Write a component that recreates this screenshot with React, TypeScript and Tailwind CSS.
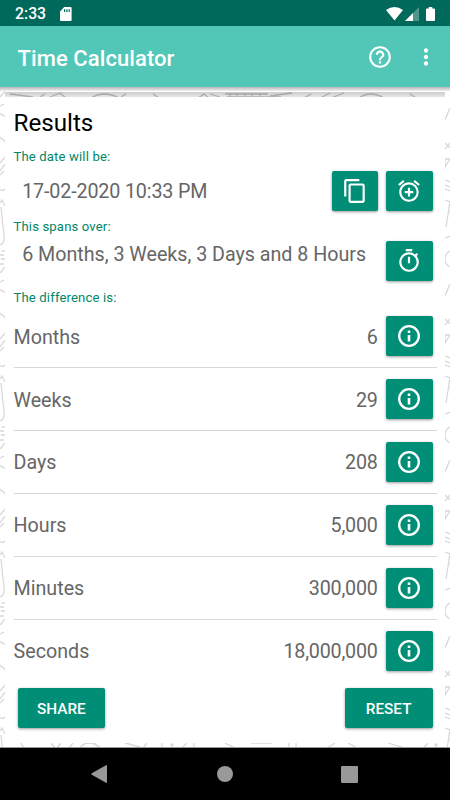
import type { ReactNode } from 'react';
import {
  MdAddAlarm,
  MdContentCopy,
  MdHelpOutline,
  MdMoreVert,
  MdOutlineTimer,
} from 'react-icons/md';

const differences = [
  { unit: 'Months', value: '6' },
  { unit: 'Weeks', value: '29' },
  { unit: 'Days', value: '208' },
  { unit: 'Hours', value: '5,000' },
  { unit: 'Minutes', value: '300,000' },
  { unit: 'Seconds', value: '18,000,000' },
];

export default function App() {
  return (
    <div className="flex h-[800px] w-[450px] flex-col overflow-hidden bg-white font-[Roboto,sans-serif]">
      <StatusBar />
      <AppBar />
      <main className="relative h-[661px] overflow-hidden">
        <Doodles />
        <div className="relative h-1 bg-gradient-to-b from-[#b8b8b8] to-[#f0f0f0]" />
        <div className="relative mx-[5px] h-px bg-white" />
        <div className="relative mx-[5px] h-[5px] bg-gradient-to-b from-black/20 to-black/10" />
        <section className="relative mx-[5px] h-[646px] bg-white pr-2 pl-[8.5px]">
          <h2 className="h-[51.5px] pt-[10px] text-[24.2px] leading-8 text-black">Results</h2>
          <Label>The date will be:</Label>
          <div className="flex h-[55px] items-start pt-[7px] pr-[4.5px]">
            <p className="flex-1 pl-[8.7px] text-[19.7px] leading-[42px] tracking-[-0.14px] text-[#666]">17-02-2020 10:33 PM</p>
            <IconButton label="Copy"><MdContentCopy size={26} /></IconButton>
            <div className="w-2" />
            <IconButton label="Add alarm"><MdAddAlarm size={26} /></IconButton>
          </div>
          <Label>This spans over:</Label>
          <div className="flex h-[55.5px] items-start pt-[6.4px] pr-[4.5px]">
            <p className="flex-1 pl-[8.7px] text-[19.7px] leading-[27px] tracking-[-0.02px] whitespace-nowrap text-[#666]">
              6 Months, 3 Weeks, 3 Days and 8 Hours
            </p>
            <IconButton label="Timer"><MdOutlineTimer size={26} /></IconButton>
          </div>
          <Label>The difference is:</Label>
          <ul>
            {differences.map((row) => (
              <li
                key={row.unit}
                className="flex h-[62.9px] items-center border-b border-[#d6d6d6] pr-[4.5px] text-[19.7px] text-[#666] last:border-transparent"
              >
                <span className="flex-1 pt-[2px]">{row.unit}</span>
                <span className="mr-[8.5px] pt-[2px] tracking-[-0.2px]">{row.value}</span>
                <IconButton label="Info"><InfoIcon /></IconButton>
              </li>
            ))}
          </ul>
          <div className="flex justify-between pt-[5.5px] pr-[4.5px] pl-1">
            <TextButton>SHARE</TextButton>
            <TextButton>RESET</TextButton>
          </div>
        </section>
      </main>
      <NavBar />
    </div>
  );
}

function Label({ children }: { children: ReactNode }) {
  return <p className="h-[15.5px] text-[13.1px] leading-[15px] tracking-[0.15px] text-[#008766]">{children}</p>;
}

function InfoIcon() {
  return (
    <svg width="26" height="26" viewBox="0 0 26 26" fill="none" stroke="currentColor">
      <circle cx="13" cy="13" r="9.8" strokeWidth="2.3" />
      <path strokeWidth="2.6" d="M13 7.6V10M13 12V18.5" />
    </svg>
  );
}

function IconButton({ label, children }: { label: string; children: ReactNode }) {
  return (
    <button
      aria-label={label}
      className="flex h-10 w-[46.3px] shrink-0 items-center justify-center rounded-[2px] bg-[#008f76] text-white shadow-[0_1px_3px_rgba(0,0,0,0.4)]"
    >
      {children}
    </button>
  );
}

function TextButton({ children }: { children: ReactNode }) {
  return (
    <button className="h-10 w-[87.7px] rounded-[2px] bg-[#008f76] pt-[2px] text-[15.3px] font-medium text-white shadow-[0_1px_3px_rgba(0,0,0,0.4)]">
      {children}
    </button>
  );
}

function StatusBar() {
  return (
    <div className="flex h-[26px] items-center bg-[#00695c] pt-[1px] pr-[15px] pl-[15px] text-white">
      <span className="w-[31px] pt-[1px] text-[15.8px] font-medium">2:33</span>
      <svg className="ml-[14px]" width="12" height="14" viewBox="0 0 12 14">
        <path fill="currentColor" fillRule="evenodd" d="M4.2 0H10.6Q11.6 0 11.6 1V13Q11.6 14 10.6 14H1Q0 14 0 13V4.4ZM4 2.3V5H5.2V2.3ZM6.3 2.3V5H7.5V2.3ZM8.6 2.3V5H9.8V2.3Z" />
      </svg>
      <div className="flex-1" />
      <svg width="17" height="14" viewBox="0 0 17 14">
        <path fill="currentColor" d="M0 3.1Q8.5-3.1 17 3.1L8.5 13.6Z" />
      </svg>
      <svg className="ml-[2px]" width="14" height="14" viewBox="0 0 14 14">
        <path fill="#4f968d" d="M14 0V14H0Z" />
        <path fill="currentColor" d="M8 6V14H0Z" />
      </svg>
      <svg className="ml-[7px]" width="9" height="14" viewBox="0 0 9 14">
        <path fill="currentColor" d="M2.7 0H6.3V1.4H8Q9 1.4 9 2.4V13Q9 14 8 14H1Q0 14 0 13V2.4Q0 1.4 1 1.4H2.7Z" />
      </svg>
    </div>
  );
}

function AppBar() {
  return (
    <header className="flex h-[61px] items-center bg-[#52c7b8] pr-[11px] pl-[17.5px] text-white">
      <h1 className="flex-1 pt-[3px] text-[22px] font-medium tracking-[0.08px]">Time Calculator</h1>
      <MdHelpOutline size={26} />
      <MdMoreVert className="ml-5" size={26} />
    </header>
  );
}

// school doodles, repeated every 176px behind the card
function Doodles() {
  return (
    <svg className="absolute inset-0" width="450" height="661" fill="none" stroke="#d8d8d8" strokeWidth="1.3">
      <defs>
        <pattern id="left" width="5" height="176" patternUnits="userSpaceOnUse" y="4">
          <path d="M0 6L5 0M0 15L4 13M0 23Q3 23 5 26M0 47Q4 48 5 51M0 72L5 66M0 80L5 73M0 84L4 80M0 98Q2 101 5 98M0 112L2 109 5 115M1 116L4 145Q5 152 0 154M2 160H5M0 164H4M1 168H5M0 173H4" />
        </pattern>
        <pattern id="right" width="5" height="176" patternUnits="userSpaceOnUse" x="445" y="4">
          <path d="M0 29L5 17M0 52L5 57M0 58L5 52M0 68H5L0 76ZM0 89L5 91M0 94L5 96M0 98L5 100M0 109L5 111M5 111L1 136M3 120L5 121M0 147L5 145M5 160Q0 162 0 168Q0 174 5 176" />
        </pattern>
      </defs>
      <path fill="url(#left)" stroke="none" d="M0 4H5V661H0Z" />
      <path fill="url(#right)" stroke="none" d="M445 4H450V661H445Z" />
      <g stroke="#c4c4c4">
        <path d="M10 7L33 10M40 10L45 7M50 10L60 6M60 6L66 11M91 11Q104 3 119 11M121 10L126 7M153 7L159 11M198 11L204 7 209 11M210 7L220 10" />
        <path d="M225 7H268M227 10H281M230 6V11M237 6V11M245 6V11M252 6V11M260 6V11M270 9L292 6M304 11L311 7M320 11L330 6M331 11L344 6M359 11Q370 3 384 11M410 7L416 11" />
      </g>
      <path d="M21 656L24 661M51 656L55 661M61 656L57 661M73 656L69 661M80 661Q87 651 101 661M94 656L101 661M125 656L140 660M147 656L143 661M162 656V661M182 661L187 656M194 656V661M225 656L235 661M251 656H272M289 656V661M296 656V661M327 661L335 656M348 656L357 661M388 656L405 661M423 661L428 656" />
      <circle cx="172" cy="658" r="1" />
      <circle cx="436" cy="658" r="1" />
      <path stroke="#999" strokeWidth="1" d="M0 660.5H450" />
    </svg>
  );
}

function NavBar() {
  return (
    <nav className="flex h-[52px] items-center justify-between bg-black pr-[92px] pl-[91px] text-[#999]">
      <svg width="16" height="18" viewBox="0 0 16 18">
        <path fill="currentColor" d="M15 .2Q16-.2 16 1V17Q16 18.2 15 17.8L.8 9.7Q0 9 .8 8.3Z" />
      </svg>
      <div className="ml-[1px] size-4 rounded-full bg-[#999]" />
      <div className="size-[17px] rounded-[1px] bg-[#999]" />
    </nav>
  );
}
